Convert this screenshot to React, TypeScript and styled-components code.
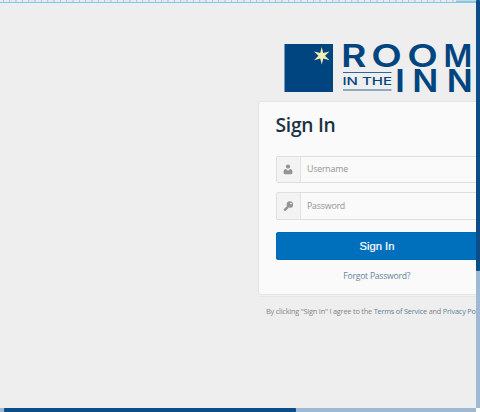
import React from "react";
import styled, { createGlobalStyle } from "styled-components";

const GlobalStyle = createGlobalStyle`
  * { box-sizing: border-box; }
  body { margin: 0; overflow: hidden; font-family: "Open Sans", "Noto Sans", sans-serif; }
`;

const Window = styled.div`
  display: grid;
  grid-template-columns: 476px 4px;
  grid-template-rows: 408px 4px;
  width: 480px;
  height: 412px;
  overflow: hidden;
  background: #eee;
`;

const Viewport = styled.main`
  min-width: 0;
  overflow: hidden;
  background: #eeeeee;
`;

const TopStrip = styled.div`
  display: flex;
  height: 3px;
  border-bottom: 1px solid #76cdf0;
`;

const Ticks = styled.div`
  width: 456px;
  background: repeating-linear-gradient(90deg, #e9ebf0 0 3px, #b9bed8 3px 4px, #e9ebf0 4px 9px, #bcc1dc 9px 10px, #e5e6ee 10px 15px, #ccd0e1 15px 17px, #e9ebf0 17px 19px);
`;

const StripEnd = styled.div`
  flex: 1;
  background: linear-gradient(#d4d4d8 0 1px, #7fc9e8 1px);
`;

const ScrollTrack = styled.div<{ $horizontal?: boolean }>`
  display: flex;
  flex-direction: ${(p) => (p.$horizontal ? "row" : "column")};
  background: #9fb9d2;
  ${(p) => p.$horizontal && "padding-left: 4px;"}
`;

const ScrollThumb = styled.div<{ $horizontal?: boolean }>`
  width: ${(p) => (p.$horizontal ? "292px" : "4px")};
  height: ${(p) => (p.$horizontal ? "4px" : "271px")};
  background: #0b4d88;
  border-radius: 1px;
`;

const Corner = styled.div`
  background: #fff;
`;

const Column = styled.div`
  display: flex;
  flex-direction: column;
  width: 238px;
  margin-left: 258px;
  padding-top: 40px;
`;

const LogoSvg = styled.svg`
  display: block;
  width: 190px;
  height: 50px;
  margin-left: 26px;
  overflow: visible;
`;

const Card = styled.form`
  height: 194px;
  margin-top: 8px;
  padding: 7px 17px 0 16.5px;
  border: 1px solid #e4e4e4;
  border-radius: 3px;
  background: #fafafa;
  box-shadow: 0 1px 0 #f3f3f3, 0 3px 0 -1px #e4e4e4;
`;

const Title = styled.h1`
  margin: 0 0 15.5px;
  color: #1b3144;
  font-size: 19.2px;
  font-weight: 600;
  line-height: 31px;
  letter-spacing: -0.25px;
`;

const Field = styled.label`
  display: flex;
  width: 202px;
  height: 27.5px;
  margin-bottom: 9px;
  overflow: hidden;
  border: 1px solid #dfdfdf;
  border-radius: 2px;
  background: #fafafa;
`;

const FieldIcon = styled.span`
  display: flex;
  flex: 0 0 24px;
  align-items: center;
  justify-content: center;
  border-right: 1px solid #e2e2e2;
  background: #f3f3f3;
  color: #949494;
`;

const Input = styled.input`
  min-width: 0;
  flex: 1;
  padding: 1px 6.5px 0;
  border: 0;
  outline: 0;
  background: transparent;
  font: 8.8px/25px "Open Sans", "Noto Sans", sans-serif;
  letter-spacing: -0.2px;
  &::placeholder { color: #949494; opacity: 1; }
`;

const SubmitButton = styled.button`
  display: block;
  width: 202px;
  height: 28px;
  margin-top: 12.5px;
  padding: 0 0 0 1px;
  border: 1px solid #0069b5;
  border-radius: 2px;
  background: #0070bd;
  color: #fff;
  font: 11.2px/26px "Liberation Sans", Arial, sans-serif;
  -webkit-text-stroke: 0.2px #fff;
`;

const Forgot = styled.a`
  display: block;
  margin-top: 8px;
  color: #66839b;
  font-size: 8.6px;
  line-height: 16px;
  letter-spacing: -0.24px;
  text-align: center;
`;

const Terms = styled.p`
  margin: 9px 0 0 8px;
  color: #848484;
  font-size: 7.3px;
  line-height: 14px;
  letter-spacing: -0.18px;
  white-space: nowrap;
`;

const TermsLink = styled.a`
  color: #607f98;
`;

const LETTERS = [
  { ch: "R", x: 340.9, y: 66.8, width: 25.5 },
  { ch: "O", x: 371.2, y: 66.8, width: 30.6 },
  { ch: "O", x: 407.2, y: 66.8, width: 30.6 },
  { ch: "M", x: 443.6, y: 66.8, width: 28.8 },
  { ch: "I", x: 395, y: 92, width: 10 },
  { ch: "N", x: 412.2, y: 92, width: 26 },
  { ch: "N", x: 446.8, y: 92, width: 26 },
];

function Logo() {
  return (
    <LogoSvg viewBox="284 43 190 50" role="img" aria-label="Room in the Inn">
      <rect x="284.5" y="44" width="48.5" height="48" fill="#00457f" />
      <path
        d="M321.7 47 L323.2 52.9 L329.5 51.4 L325 55.7 L329.5 60.3 L323.3 58.6 L321.8 64.4 L320.2 58.6 L314 60.3 L318.5 55.7 L314 51.4 L320.2 52.9 Z"
        fill="#f3efb4"
      />
      <g fill="#00457f" fontFamily="Inter, sans-serif" fontWeight="600">
        {LETTERS.map((l, i) => (
          <text key={i} x={l.x} y={l.y} fontSize="31" textLength={l.width} lengthAdjust="spacingAndGlyphs">
            {l.ch}
          </text>
        ))}
        <text x="342.5" y="85.3" fontSize="10.6" fontWeight="500" textLength="49.5" lengthAdjust="spacingAndGlyphs">
          IN THE
        </text>
      </g>
      <path d="M343 72.5H391.5M343 90H391.5" stroke="#2e6797" strokeWidth="1" />
    </LogoSvg>
  );
}

const UserIcon = () => (
  <svg width="10" height="11" viewBox="0 0 10 11" fill="currentColor">
    <circle cx="5" cy="2.6" r="2.1" />
    <path d="M2.8 5 L5 6.8 L7.2 5 Q9.5 5.4 9.5 8.5 Q9.5 10.2 8 10.2 H2 Q.5 10.2 .5 8.5 Q.5 5.4 2.8 5Z" />
  </svg>
);

const KeyIcon = () => (
  <svg width="10.5" height="10.5" viewBox="0 0 10 10">
    <path d="M5 5 L1 8.8 M2 8 L3 9 M3.5 6.5 L4.5 7.5" stroke="currentColor" strokeWidth="1.8" />
    <circle cx="6.6" cy="3.4" r="3.1" fill="currentColor" />
    <circle cx="7.6" cy="2.4" r=".8" fill="#f3f3f3" />
  </svg>
);

export default function App() {
  return (
    <>
      <GlobalStyle />
      <Window>
        <Viewport>
          <TopStrip>
            <Ticks />
            <StripEnd />
          </TopStrip>
          <Column>
            <Logo />
            <Card>
              <Title>Sign In</Title>
              <Field>
                <FieldIcon><UserIcon /></FieldIcon>
                <Input placeholder="Username" />
              </Field>
              <Field>
                <FieldIcon><KeyIcon /></FieldIcon>
                <Input type="password" placeholder="Password" />
              </Field>
              <SubmitButton type="button">Sign In</SubmitButton>
              <Forgot>Forgot Password?</Forgot>
            </Card>
            <Terms>
              By clicking "Sign In" I agree to the <TermsLink>Terms of Service</TermsLink> and{" "}
              <TermsLink>Privacy Policy</TermsLink>
            </Terms>
          </Column>
        </Viewport>
        <ScrollTrack><ScrollThumb /></ScrollTrack>
        <ScrollTrack $horizontal><ScrollThumb $horizontal /></ScrollTrack>
        <Corner />
      </Window>
    </>
  );
}
